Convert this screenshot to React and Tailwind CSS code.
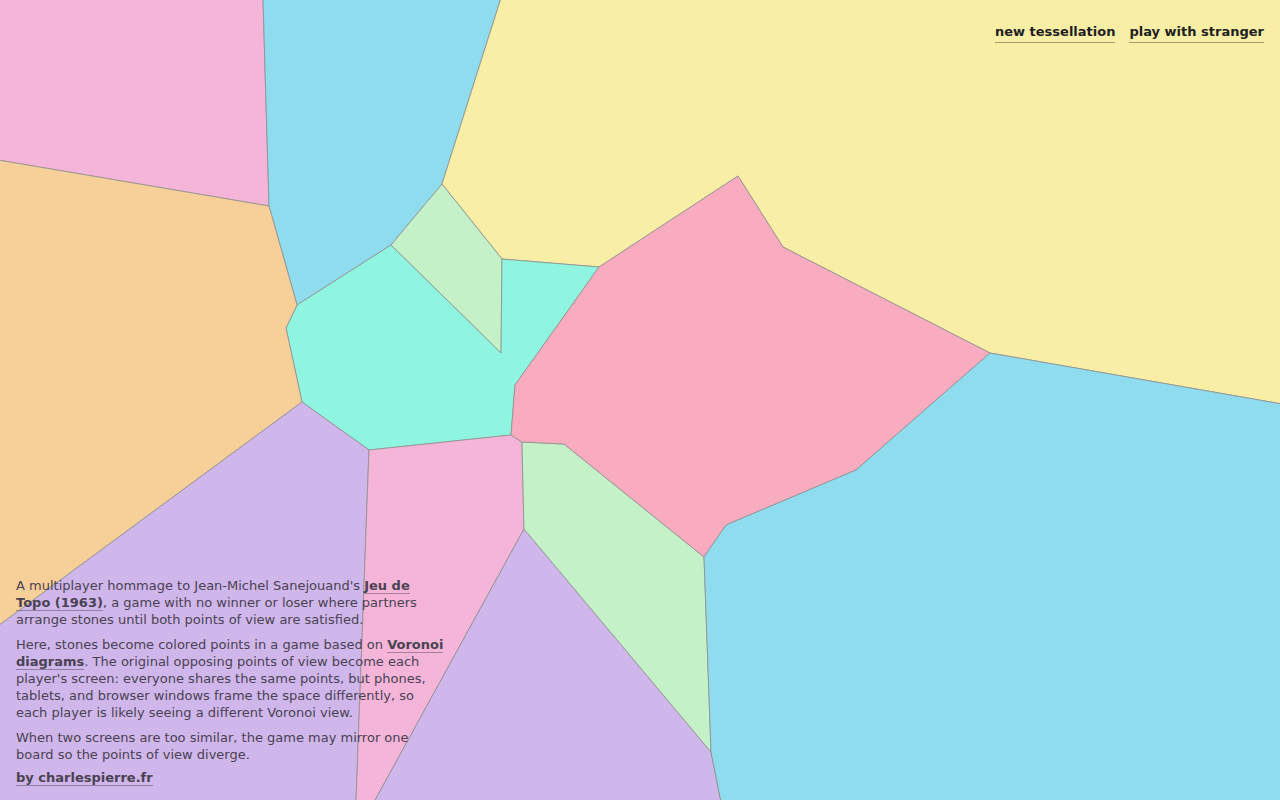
const cells = [
  { fill: "#f4b5d9", pts: "-2,-2 263,-2 269,206 -2,160" },
  { fill: "#8fdcef", pts: "263,-2 501,-2 442,184 391,245 297,305 269,206" },
  { fill: "#f9eea6", pts: "501,-2 1282,-2 1282,404 990,353 783,247 738,176 599,267 502,259 442,184" },
  { fill: "#c5f1c9", pts: "442,184 502,259 501,353 391,245" },
  { fill: "#8ff5e0", pts: "297,305 391,245 501,353 502,259 599,267 515,385 511,435 369,450 302,402 286,328" },
  { fill: "#f6cf99", pts: "-2,160 269,206 297,305 286,328 302,402 -2,626" },
  { fill: "#cfb6eb", pts: "-2,626 302,402 369,450 356,802 -2,802" },
  { fill: "#f4b5d9", pts: "369,450 511,435 522,442 524,529 374,802 356,802" },
  { fill: "#cfb6eb", pts: "524,529 711,752 721,802 374,802" },
  { fill: "#c5f1c9", pts: "522,442 564,444 704,557 711,752 524,529" },
  { fill: "#f9acbf", pts: "599,267 738,176 783,247 990,353 856,470 726,525 704,557 564,444 522,442 511,435 515,385" },
  { fill: "#8fdcef", pts: "990,353 1282,404 1282,802 721,802 711,752 704,557 726,525 856,470" },
];

const Board = () => (
  <svg className="absolute inset-0 h-full w-full" viewBox="0 0 1280 800" preserveAspectRatio="none">
    {cells.map((c, i) => (
      <polygon key={i} points={c.pts} fill={c.fill} stroke="#8f8f8f" strokeOpacity="0.8" strokeWidth="1" strokeLinejoin="round" />
    ))}
  </svg>
);

const Link = ({ children }) => (
  <a href="#" className="font-bold border-b border-[#0000004d]">
    {children}
  </a>
);

export default function App() {
  return (
    <div className="relative h-[800px] w-[1280px] overflow-hidden font-['DejaVu_Sans',sans-serif]">
      <Board />

      <nav className="absolute right-4 top-[23px] flex gap-[14px] text-[13px] leading-[17px] text-[#1f1f1f]">
        <a href="#" className="font-bold border-b border-[#00000055] pb-[2px]">new tessellation</a>
        <a href="#" className="font-bold border-b border-[#00000055] pb-[2px]">play with stranger</a>
      </nav>

      <div className="absolute bottom-[14px] left-4 w-[432px] text-[13px] leading-[17px] text-[#4a4252] flex flex-col gap-2">
        <p>
          A multiplayer hommage to Jean-Michel Sanejouand's <Link>Jeu de Topo (1963)</Link>, a game with no winner or loser where partners arrange stones until both points of view are satisfied.
        </p>
        <p>
          Here, stones become colored points in a game based on <Link>Voronoi diagrams</Link>. The original opposing points of view become each player's screen: everyone shares the same points, but phones, tablets, and browser windows frame the space differently, so each player is likely seeing a different Voronoi view.
        </p>
        <p>
          When two screens are too similar, the game may mirror one board so the points of view diverge.
        </p>
        <p className="-mt-[2px]">
          <Link>by charlespierre.fr</Link>
        </p>
      </div>
    </div>
  );
}
